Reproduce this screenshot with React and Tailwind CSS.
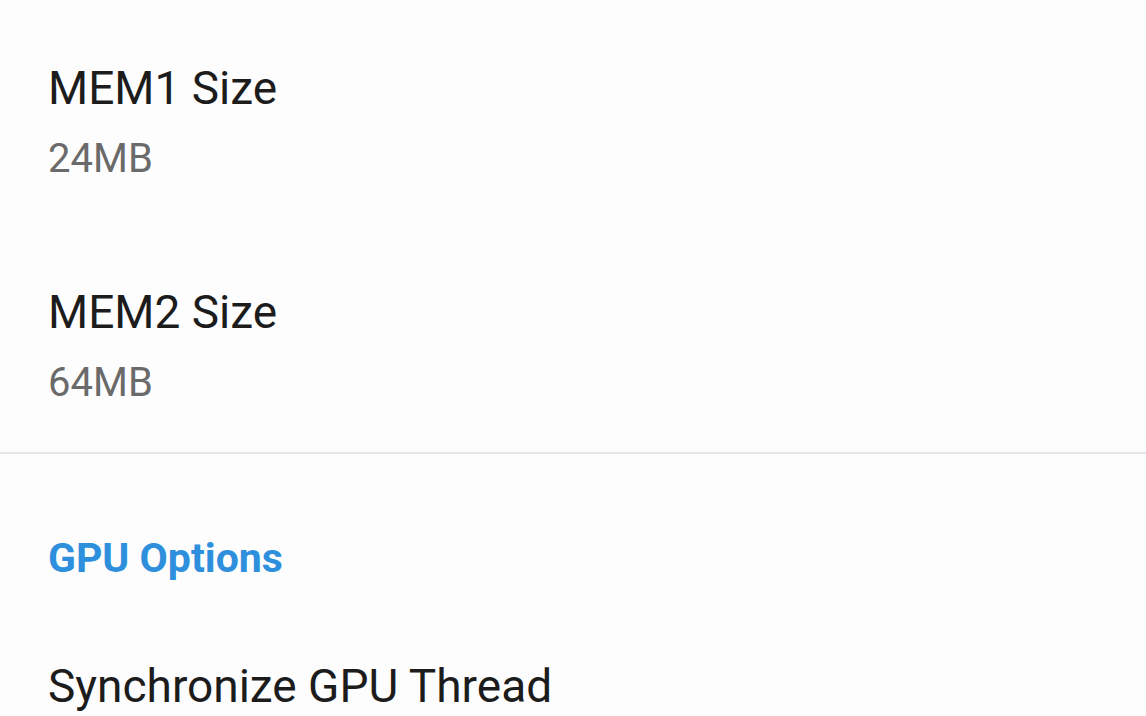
export default function App() {
  return (
    <div className="w-[1146px] h-[716px] overflow-hidden bg-[#fdfdfd] font-['Roboto',sans-serif]">
      <div className="pl-[48px] pt-[60px] flex flex-col">
        <div className="text-[46px] leading-[56px] text-[#1c1c1c]">MEM1 Size</div>
        <div className="text-[40px] leading-[46px] text-[#6a6a6a] mt-[20px]">24MB</div>
      </div>
      <div className="pl-[48px] pt-[102px] flex flex-col">
        <div className="text-[46px] leading-[56px] text-[#1c1c1c]">MEM2 Size</div>
        <div className="text-[40px] leading-[46px] text-[#6a6a6a] mt-[20px]">64MB</div>
      </div>
      <div className="mt-[46px] h-[2px] bg-[#e4e5e8]" />
      <div className="pl-[48px] pt-[82px]">
        <div className="text-[41px] leading-[44px] font-bold text-[#2e90dd]">GPU Options</div>
      </div>
      <div className="pl-[48px] pt-[78px]">
        <div className="text-[46px] leading-[56px] text-[#1c1c1c]">Synchronize GPU Thread</div>
      </div>
    </div>
  );
}
